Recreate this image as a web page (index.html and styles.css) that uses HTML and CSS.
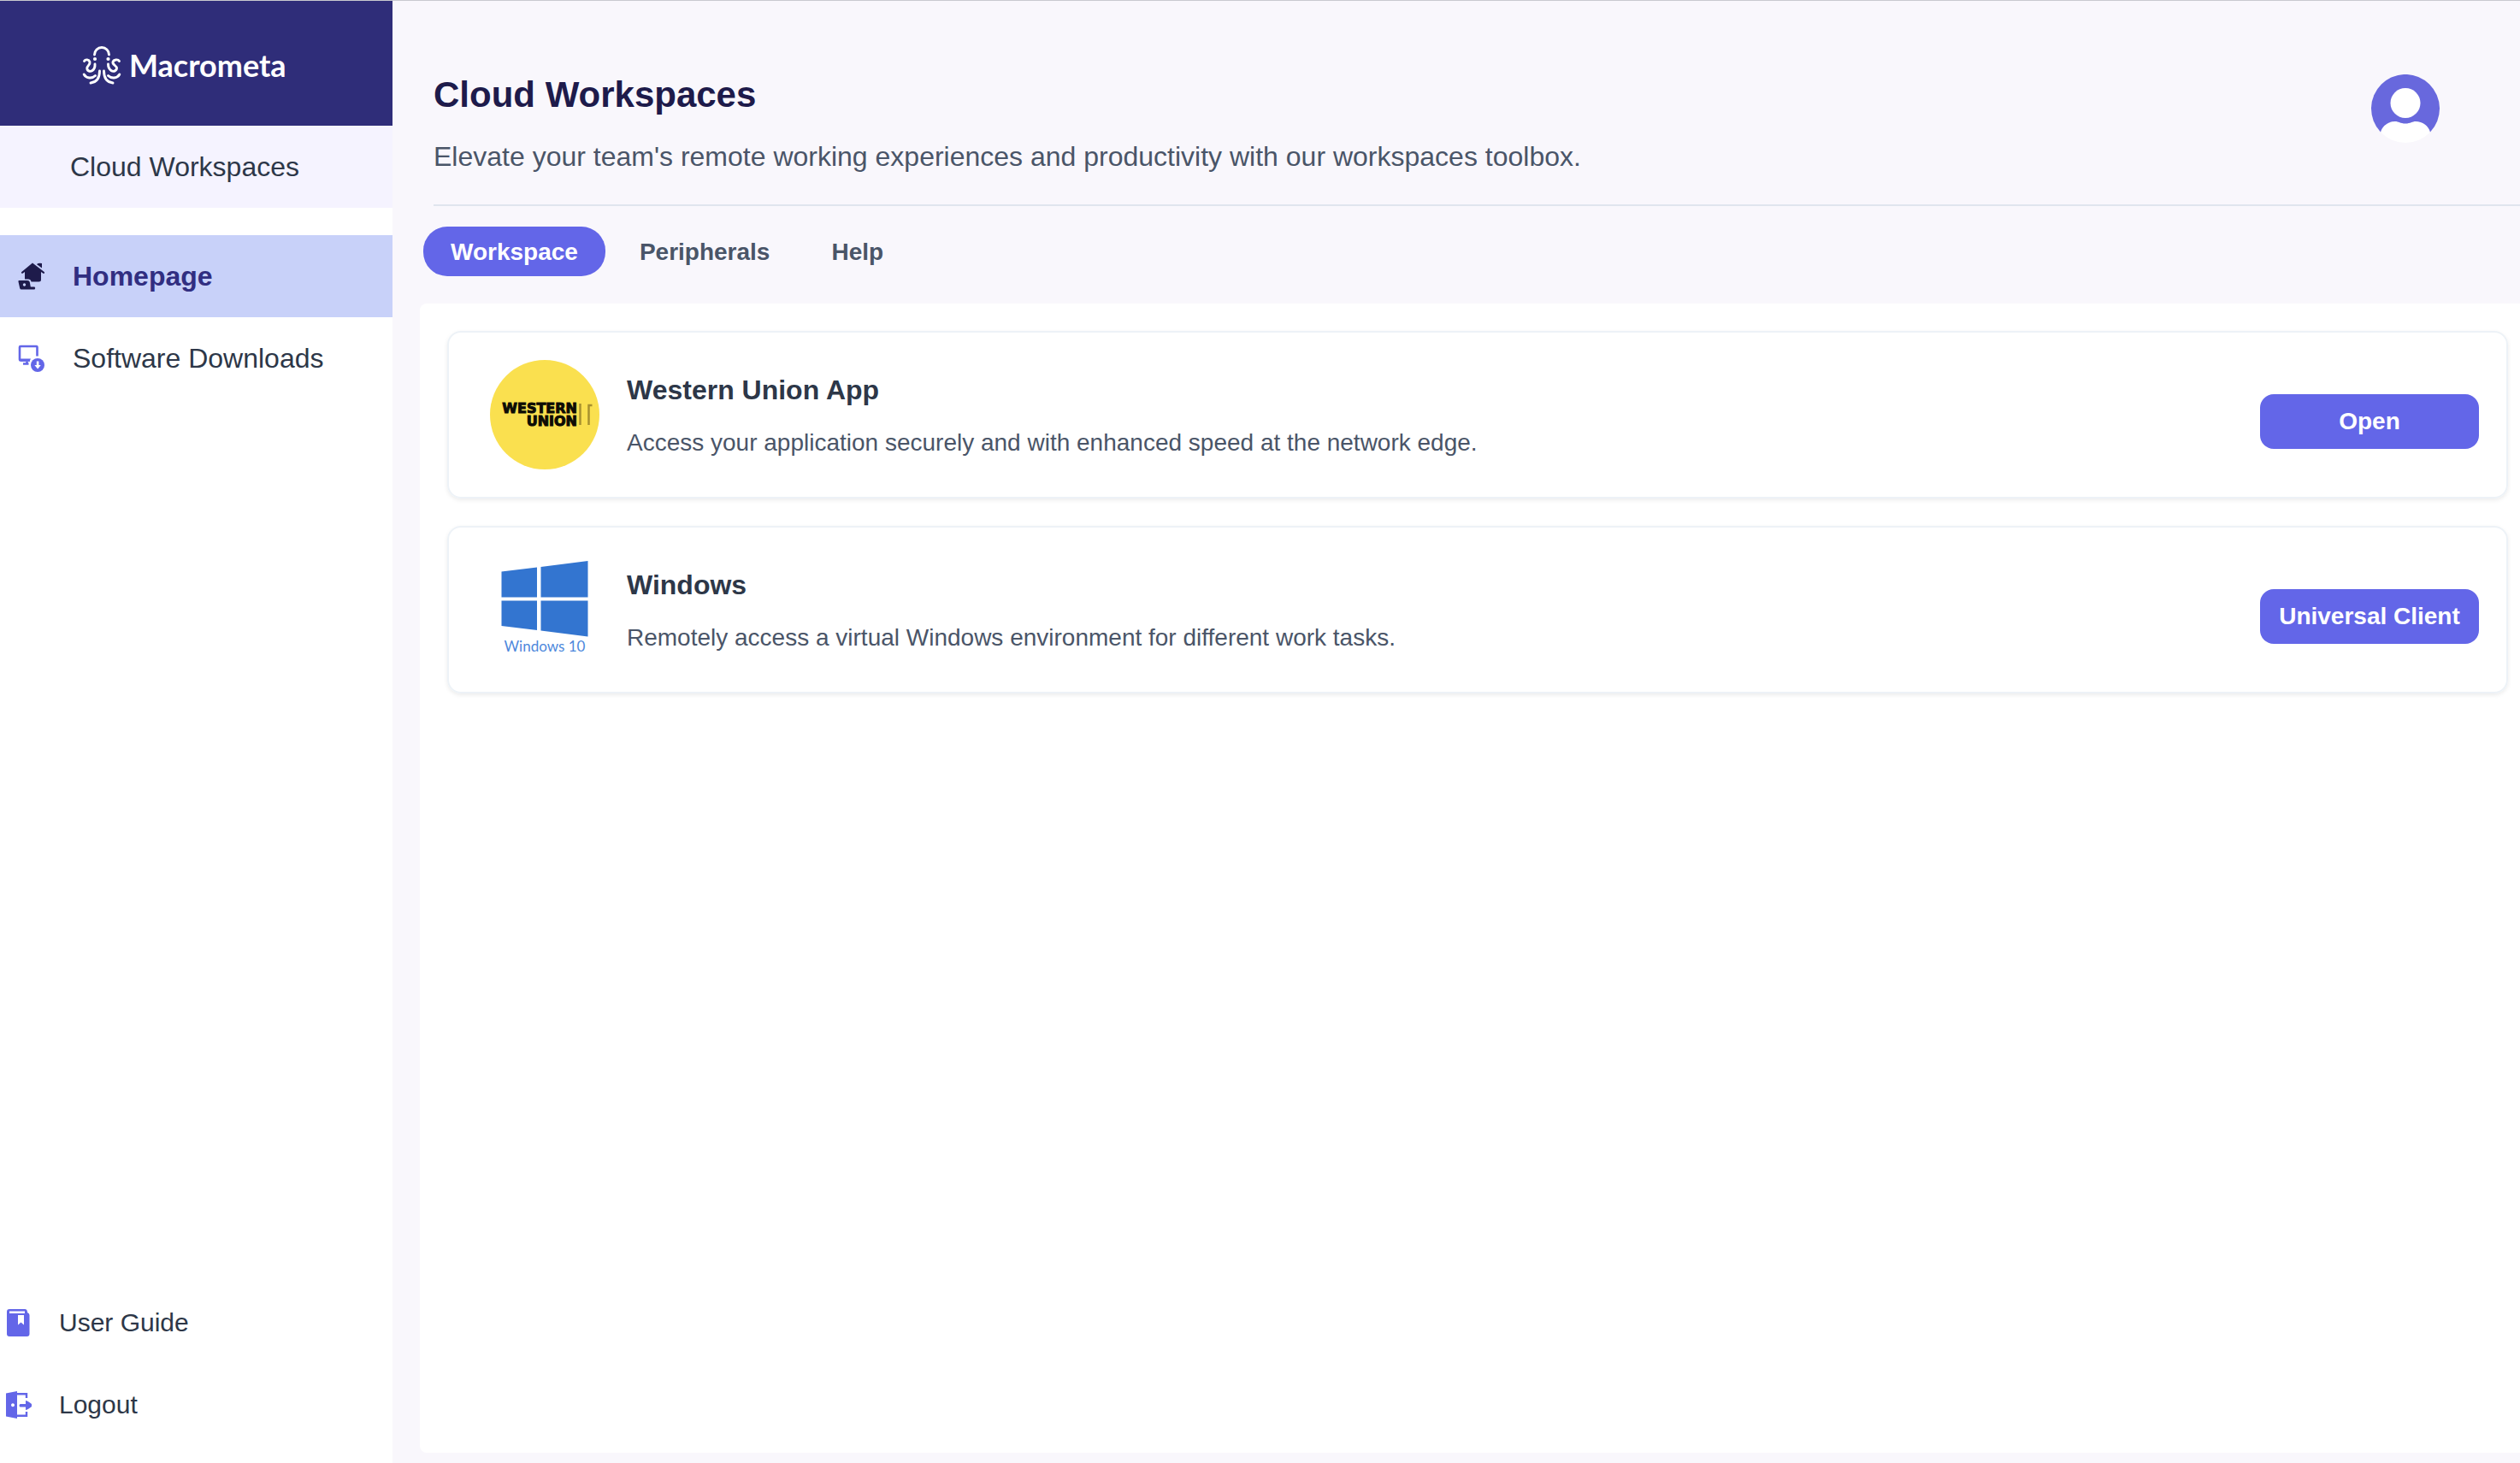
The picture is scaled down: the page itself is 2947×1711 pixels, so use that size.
FILE: index.html
```html
<!DOCTYPE html>
<html lang="en">
<head>
<meta charset="utf-8">
<meta name="viewport" content="width=device-width, initial-scale=1">
<title>Cloud Workspaces</title>
<link rel="stylesheet" href="styles.css">
</head>
<body>
<div class="app">
  <aside class="sidebar">
    <div class="brand">
      <svg class="brand-icon" viewBox="0 0 44 44" fill="none" stroke="#fff" stroke-width="2.9" stroke-linecap="round" aria-hidden="true">
        <path d="M13.5 10a8.5 8.5 0 0 1 17 0"/>
        <circle cx="14" cy="15" r="2.1" fill="#fff" stroke="none"/>
        <circle cx="29.5" cy="15" r="2.1" fill="#fff" stroke="none"/>
        <path d="M1.5 17.500C3 15 7 15.500 8 18.500C8.800 21.500 5 23 4.800 25.500C4.600 28.500 8 30.500 11 28.500C14 26.500 14.200 24 14 21"/>
        <path d="M42.500 17.500C41 15 36 15.500 35 18.500C34.200 21.500 39.500 23 39.500 25.500C39.500 28.500 36 30.500 33 28.500C30 26.500 29.500 24 29.500 21"/>
        <path d="M1.200 33C4 38 11 38 14.500 34.500"/>
        <path d="M42.800 33C40 38 33 38 29.500 34.500"/>
        <path d="M19.500 29C19.500 37 17 42 9 43"/>
        <path d="M24.500 29C24.500 37 27 42 35 43"/>
      </svg>
      <span class="brand-name">Macrometa</span>
    </div>
    <div class="product">Cloud Workspaces</div>
    <nav class="nav">
      <a class="nav-item active" href="#">
        <svg class="nav-icon" viewBox="0 0 32 32" fill="#1e1b4b" aria-hidden="true">
          <path d="M17 0.500L31 11.300Q31.500 13.300 29.500 12.800L27 11V20Q27 22.500 24.500 22.500H15.500Q15 19.500 12 19.500H8V11L5.500 12.800Q3.500 13.200 4 11.300Z"/>
          <path d="M22 2Q24 0.200 28 1V6.500L22.500 2.500Z"/>
          <path fill-rule="evenodd" d="M1 21H11Q13.500 21 13.800 23L14.800 28.500H19.500Q21 30 19.500 31.500H4Q2.500 31.500 2.200 30L0.500 22.500Q0.300 21 1 21ZM7.500 24.300a1.700 1.700 0 1 0 0.010 0Z"/>
        </svg>
        <span>Homepage</span>
      </a>
      <a class="nav-item" href="#">
        <svg class="nav-icon" viewBox="0 0 32 32" aria-hidden="true">
          <path d="M22.500 13.500V3Q22.500 2 21.500 2H3Q2 2 2 3V17.500Q2 18.500 3 18.500H14M10.500 20V22.500M6 22.500H12.500" fill="none" stroke="#6366e8" stroke-width="2.600"/>
          <path d="M2 16.500H15L13.500 19.500H3Z" fill="#6366e8"/>
          <circle cx="23" cy="24" r="8" fill="#6366e8"/>
          <path d="M21.800 19.500H24.400V24H26.800L23.100 28.500L19.400 24H21.800Z" fill="#fff"/>
        </svg>
        <span>Software Downloads</span>
      </a>
    </nav>
    <nav class="nav-bottom">
      <a class="nav-item small" href="#">
        <svg class="nav-icon" viewBox="0 0 32 32" aria-hidden="true">
          <path fill="#6366e8" fill-rule="evenodd" d="M4 0H22Q25 0 25 4Q27.500 5 27.500 7V29Q27.500 32 24.500 32H4Q1 32 1 29V3Q1 0 4 0ZM4 2.500V5H22V2.500ZM14 7V18.500L17.500 15.500L21 18.500V7Z"/>
        </svg>
        <span>User Guide</span>
      </a>
      <a class="nav-item small" href="#">
        <svg class="nav-icon" viewBox="0 0 32 32" aria-hidden="true">
          <path fill="#6366e8" fill-rule="evenodd" d="M0 2.500L13 0V32L0 29.500ZM8 14.300a2 2 0 1 0 0.010 0Z"/>
          <path d="M13 3.200H24V8M13 28.800H24V24" fill="none" stroke="#6366e8" stroke-width="2.400"/>
          <path d="M16.500 15H23V11Q25 11 30 15V18Q25 22 23 22V18.500H16.500Q14.500 16.800 16.500 15Z" fill="#6366e8"/>
        </svg>
        <span>Logout</span>
      </a>
    </nav>
  </aside>

  <main class="main">
    <header class="page-head">
      <div>
        <h1 class="title">Cloud Workspaces</h1>
        <p class="subtitle">Elevate your team's remote working experiences and productivity with our workspaces toolbox.</p>
      </div>
      <button class="avatar" type="button" aria-label="Account">
        <svg viewBox="0 0 80 80" aria-hidden="true">
          <path d="M11 67.500A40 40 0 1 1 69 67.500Z" fill="#6868dd"/>
          <circle cx="40" cy="33.500" r="17.500" fill="#fff"/>
          <path d="M11 67.500C13 60 20 55 28 55C32 55 34 57.500 40 57.500C46 57.500 48 55 52 55C60 55 67 60 69 67.500A40 40 0 0 1 11 67.500Z" fill="#fff"/>
        </svg>
      </button>
    </header>

    <div class="tabs">
      <button class="tab selected" type="button">Workspace</button>
      <button class="tab" type="button">Peripherals</button>
      <button class="tab" type="button">Help</button>
    </div>

    <section class="panel">
      <article class="card">
        <svg class="logo" viewBox="0 0 128 128" role="img" aria-label="Western Union">
          <circle cx="64" cy="64" r="64" fill="#fae04f"/>
          <text class="wu" x="102" y="62" text-anchor="end">WESTERN</text>
          <text class="wu" x="102" y="77" text-anchor="end">UNION</text>
          <path d="M105.500 51V76M115.500 76V53H119.500" fill="none" stroke="#a8912f" stroke-width="2.500"/>
        </svg>
        <div class="info">
          <h2 class="card-title">Western Union App</h2>
          <p class="card-text">Access your application securely and with enhanced speed at the network edge.</p>
        </div>
        <button class="action" type="button">Open</button>
      </article>
      <article class="card">
        <svg class="logo" viewBox="0 0 128 128" role="img" aria-label="Windows 10">
          <g fill="#3375d0">
            <path d="M13.500 19.500L55 14.500V49.500H13.500Z"/>
            <path d="M59.500 14L114.500 7V49.500H59.500Z"/>
            <path d="M13.500 53.500H55V88L13.500 83Z"/>
            <path d="M59.500 53.500H114.500V95.500L59.500 88.500Z"/>
          </g>
          <text class="win" x="64" y="113" text-anchor="middle">Windows 10</text>
        </svg>
        <div class="info">
          <h2 class="card-title">Windows</h2>
          <p class="card-text">Remotely access a virtual Windows environment for different work tasks.</p>
        </div>
        <button class="action" type="button">Universal Client</button>
      </article>
    </section>
  </main>
</div>
</body>
</html>
```
FILE: styles.css
```css
* {
  box-sizing: border-box;
}

body {
  margin: 0;
  font-family: "Liberation Sans", Arial, sans-serif;
  font-size: 32px;
  color: #2d3748;
  background: #f9f7fc;
}

h1, h2, p {
  margin: 0;
}

button {
  border: 0;
  padding: 0;
  background: none;
  font-family: inherit;
}

.app {
  display: flex;
  min-height: 100vh;
  border-top: 1px solid #c9c9cf;
}

/* Sidebar */
.sidebar {
  flex: none;
  display: flex;
  flex-direction: column;
  width: 459px;
  padding-bottom: 20px;
  background: #fff;
}

.brand {
  display: flex;
  align-items: center;
  gap: 10px;
  height: 146px;
  padding: 4px 0 0 97px;
  background: #2f2d79;
}

.brand-icon {
  width: 44px;
  height: 44px;
  overflow: visible;
}

.brand-name {
  font: 700 36px/40px Lato, sans-serif;
  color: #fff;
}

.product {
  padding-left: 82px;
  line-height: 96px;
  background: #f5f3ff;
}

.nav {
  padding-top: 32px;
}

.nav-bottom {
  margin-top: auto;
}

.nav-item {
  display: flex;
  align-items: center;
  gap: 32px;
  height: 96px;
  padding-left: 21px;
  color: #2d3748;
  text-decoration: none;
}

.nav-item.active {
  background: #c8d1f9;
  color: #312e81;
  font-weight: 700;
}

.nav-item.small {
  padding-left: 7px;
  gap: 30px;
  font-size: 30px;
}

.nav-icon {
  width: 32px;
  height: 32px;
}

/* Main area */
.main {
  flex: 1;
  display: flex;
  flex-direction: column;
  min-width: 0;
  padding: 82px 0 12px 32px;
}

.page-head {
  display: flex;
  justify-content: space-between;
  margin-left: 16px;
  padding: 4px 94px 32px 0;
  border-bottom: 2px solid #e0e5ee;
}

.title {
  font-size: 42px;
  line-height: 48px;
  color: #1e1b4b;
}

.subtitle {
  margin-top: 24px;
  line-height: 48px;
  color: #4a5568;
}

.avatar {
  width: 80px;
  height: 80px;
  flex: none;
}

.avatar svg {
  display: block;
}

.tabs {
  display: flex;
  gap: 8px;
  padding: 24px 0 32px 4px;
}

.tab {
  height: 58px;
  padding: 2px 32px 0;
  border-radius: 28px;
  font-size: 28px;
  font-weight: 700;
  color: #4a5568;
}

.tab.selected {
  background: #6366e8;
  color: #fff;
}

.panel {
  flex: 1;
  display: flex;
  flex-direction: column;
  gap: 32px;
  padding: 32px 14px 32px 32px;
  border-radius: 8px 0 0 8px;
  background: #fff;
}

.card {
  display: flex;
  align-items: center;
  gap: 32px;
  padding: 32px 32px 32px 48px;
  border: 2px solid #edf2f7;
  border-radius: 16px;
  box-shadow: 0 2px 5px rgba(0, 0, 0, 0.08);
}

.logo {
  flex: none;
  width: 128px;
  height: 128px;
}

.info {
  flex: 1;
  padding-top: 6px;
}

.card-title {
  font-size: 32px;
  line-height: 40px;
}

.card-text {
  margin-top: 20px;
  font-size: 28px;
  line-height: 44px;
  color: #4a5568;
}

.action {
  width: 256px;
  height: 64px;
  margin-top: 16px;
  border-radius: 16px;
  background: #6366e8;
  font-size: 28px;
  font-weight: 700;
  color: #fff;
}

.wu {
  font: 700 16px "DejaVu Sans", sans-serif;
  fill: #0d0c05;
  stroke: #0d0c05;
  stroke-width: 1px;
}

.win {
  font: 400 17px Lato, sans-serif;
  fill: #4d88dc;
}
```
